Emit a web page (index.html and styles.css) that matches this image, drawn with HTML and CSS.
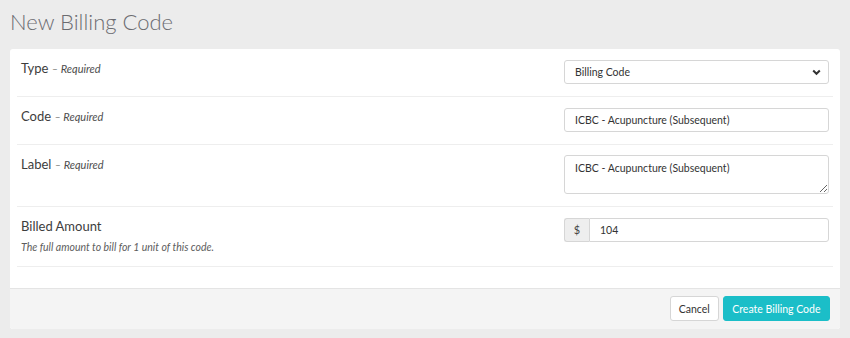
FILE: index.html
```html
<!DOCTYPE html>
<html>
<head>
    <link rel="stylesheet" href="styles.css">
    <title>New Billing Code</title>
</head>
<body>
    <h1 class="page-title">New Billing Code</h1>

    <form class="card">
        <div class="card-body">
            <div class="form-row">
                <div class="field-label">Type <span class="required">– Required</span></div>
                <div class="field-control select-wrap">
                    <select class="input">
                        <option>Billing Code</option>
                    </select>
                    <svg class="chevron" width="9" height="7" viewBox="0 0 9 7">
                        <path d="M1.2 1.5 L4.5 4.8 L7.8 1.5" fill="none" stroke="#333" stroke-width="2"/>
                    </svg>
                </div>
            </div>

            <div class="form-row">
                <div class="field-label">Code <span class="required">– Required</span></div>
                <div class="field-control">
                    <input class="input" type="text" value="ICBC - Acupuncture (Subsequent)">
                </div>
            </div>

            <div class="form-row form-row-tall">
                <div class="field-label">Label <span class="required">– Required</span></div>
                <div class="field-control">
                    <textarea class="input textarea">ICBC - Acupuncture (Subsequent)</textarea>
                </div>
            </div>

            <div class="form-row">
                <div class="field-label">
                    Billed Amount
                    <div class="help-text">The full amount to bill for 1 unit of this code.</div>
                </div>
                <div class="field-control input-group">
                    <span class="addon">$</span>
                    <input class="input" type="text" value="104">
                </div>
            </div>
        </div>

        <!-- Actions -->
        <div class="card-footer">
            <button type="button" class="btn btn-default">Cancel</button>
            <button type="button" class="btn btn-primary">Create Billing Code</button>
        </div>
    </form>
</body>
</html>
```

FILE: styles.css
```css
body {
    margin: 0;
    padding: 7px 10px 0;
    background-color: #ececec;
    font-family: 'Lato', 'Open Sans', Arial, sans-serif;
    color: #333333;
}

.page-title {
    margin: 0 0 12px;
    font-size: 22px;
    line-height: 30px;
    font-weight: 300;
    color: #6b6b70;
}

/* Card */
.card {
    width: 830px;
    background-color: #ffffff;
    border-radius: 3px;
    box-sizing: border-box;
    overflow: hidden;
}

.card-body {
    padding: 0 7px 21px;
}

.form-row {
    display: flex;
    justify-content: space-between;
    align-items: flex-start;
    padding: 11px 4px 12px;
    border-bottom: 1px solid #eeeeee;
}

.form-row-tall {
    padding-top: 10px;
}

.form-row-tall .field-label {
    padding-top: 1px;
}

.field-label {
    font-size: 13px;
    line-height: 17px;
    color: #3d3d3d;
}

.required {
    font-size: 11px;
    font-style: italic;
    color: #4d4d4d;
}

.help-text {
    margin-top: 5px;
    font-size: 10.5px;
    line-height: 14px;
    font-style: italic;
    color: #5d5d5d;
}

.field-control {
    width: 265px;
}

.input {
    display: block;
    width: 100%;
    height: 24px;
    box-sizing: border-box;
    margin: 0;
    padding: 0 10px;
    border: 1px solid #d6d6d6;
    border-radius: 3px;
    background-color: #ffffff;
    font-family: inherit;
    font-size: 10.5px;
    color: #333333;
    outline: none;
}

/* Select */
.select-wrap {
    position: relative;
}

.select-wrap select {
    appearance: none;
    -webkit-appearance: none;
}

.chevron {
    position: absolute;
    right: 8px;
    top: 9px;
}

.textarea {
    height: 39px;
    padding: 5px 10px;
    resize: vertical;
    line-height: 14px;
}

/* Money input */
.input-group {
    display: flex;
}

.addon {
    flex: none;
    width: 25px;
    height: 24px;
    box-sizing: border-box;
    border: 1px solid #d6d6d6;
    border-right: none;
    border-radius: 3px 0 0 3px;
    background-color: #eeeeee;
    font-size: 11px;
    line-height: 22px;
    text-align: center;
    color: #444444;
}

.input-group .input {
    border-radius: 0 3px 3px 0;
}

/* Footer */
.card-footer {
    display: flex;
    justify-content: flex-end;
    gap: 4px;
    padding: 7px 10px 8px;
    border-top: 1px solid #e4e4e4;
    background-color: #f4f4f4;
}

.btn {
    height: 25px;
    padding: 0 8px;
    border-radius: 3px;
    font-family: inherit;
    font-size: 10.5px;
    cursor: pointer;
}

.btn-default {
    background-color: #ffffff;
    border: 1px solid #d6d6d6;
    color: #333333;
}

.btn-primary {
    background-color: #1bbec8;
    border: 1px solid #1bbec8;
    color: #ffffff;
    padding: 0 8.5px;
}
```
